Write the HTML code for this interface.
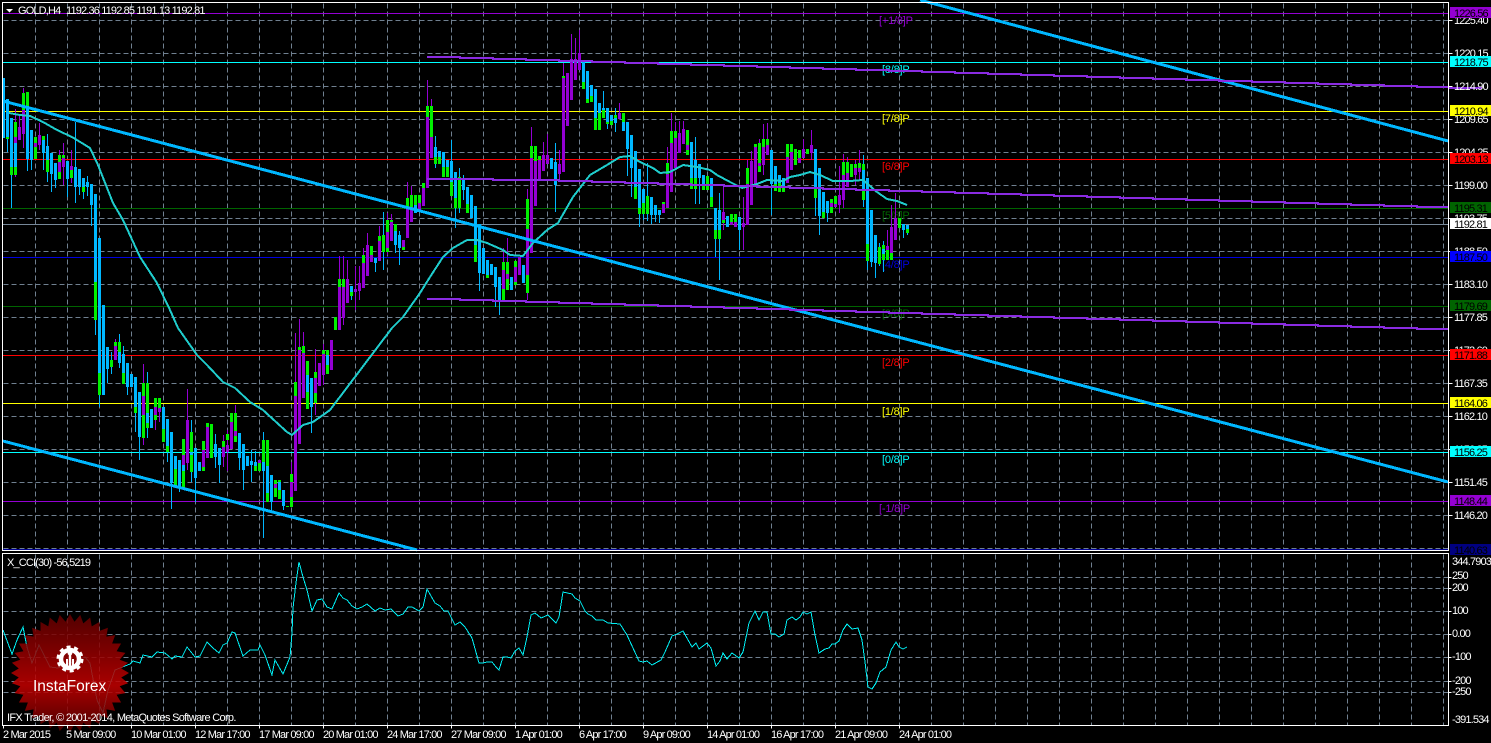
<!DOCTYPE html>
<html><head><meta charset="utf-8"><title>GOLD,H4</title>
<style>
html,body{margin:0;padding:0;background:#000;width:1491px;height:743px;overflow:hidden}
svg{display:block}
text{font-family:"Liberation Sans",sans-serif;font-size:11px;letter-spacing:-.85px;fill:#fff}
.k{fill:#000}
.m{font-size:11px;letter-spacing:-.2px}
</style></head><body>
<svg width="1491" height="743" viewBox="0 0 1491 743" xmlns="http://www.w3.org/2000/svg">
<defs>
<clipPath id="star">
<polygon points="0,-59 51.1,29.5 -51.1,29.5" transform="translate(70 673)"/>
<polygon points="0,-59 51.1,29.5 -51.1,29.5" transform="translate(70 673) rotate(10)"/>
<polygon points="0,-59 51.1,29.5 -51.1,29.5" transform="translate(70 673) rotate(20)"/>
<polygon points="0,-59 51.1,29.5 -51.1,29.5" transform="translate(70 673) rotate(30)"/>
<polygon points="0,-59 51.1,29.5 -51.1,29.5" transform="translate(70 673) rotate(40)"/>
<polygon points="0,-59 51.1,29.5 -51.1,29.5" transform="translate(70 673) rotate(50)"/>
<polygon points="0,-59 51.1,29.5 -51.1,29.5" transform="translate(70 673) rotate(60)"/>
<polygon points="0,-59 51.1,29.5 -51.1,29.5" transform="translate(70 673) rotate(70)"/>
<polygon points="0,-59 51.1,29.5 -51.1,29.5" transform="translate(70 673) rotate(80)"/>
<polygon points="0,-59 51.1,29.5 -51.1,29.5" transform="translate(70 673) rotate(90)"/>
<polygon points="0,-59 51.1,29.5 -51.1,29.5" transform="translate(70 673) rotate(100)"/>
<polygon points="0,-59 51.1,29.5 -51.1,29.5" transform="translate(70 673) rotate(110)"/>
</clipPath>
<linearGradient id="lg" x1="0" y1="0" x2="0" y2="1"><stop offset="0" stop-color="#5e0000"/><stop offset=".3" stop-color="#8c0000"/><stop offset=".6" stop-color="#c40000"/><stop offset=".8" stop-color="#8a0000"/><stop offset="1" stop-color="#4c0000"/></linearGradient>
</defs>
<rect width="1491" height="743" fill="#000"/>

<!-- grid -->
<g transform="translate(.5 .5)" stroke="#708090" stroke-width="1" stroke-dasharray="5 3" fill="none" shape-rendering="crispEdges">
<path d="M3 20H1448M3 53H1448M3 86H1448M3 119H1448M3 152H1448M3 185H1448M3 218H1448M3 251H1448M3 284H1448M3 317H1448M3 350H1448M3 383H1448M3 416H1448M3 449H1448M3 482H1448M3 515H1448M3 548H1448"/>
<path d="M35 3V549M67 3V549M99 3V549M131 3V549M163 3V549M195 3V549M227 3V549M259 3V549M291 3V549M323 3V549M355 3V549M387 3V549M419 3V549M451 3V549M483 3V549M515 3V549M547 3V549M579 3V549M611 3V549M643 3V549M675 3V549M707 3V549M739 3V549M771 3V549M803 3V549M835 3V549M867 3V549M899 3V549M931 3V549M963 3V549M995 3V549M1027 3V549M1059 3V549M1091 3V549M1123 3V549M1155 3V549M1187 3V549M1219 3V549M1251 3V549M1283 3V549M1315 3V549M1347 3V549M1379 3V549M1411 3V549M1443 3V549"/>
<path d="M3 577H1448M3 588H1448M3 611H1448M3 634H1448M3 657H1448M3 681H1448M3 692H1448"/>
<path d="M35 554V725M67 554V725M99 554V725M131 554V725M163 554V725M195 554V725M227 554V725M259 554V725M291 554V725M323 554V725M355 554V725M387 554V725M419 554V725M451 554V725M483 554V725M515 554V725M547 554V725M579 554V725M611 554V725M643 554V725M675 554V725M707 554V725M739 554V725M771 554V725M803 554V725M835 554V725M867 554V725M899 554V725M931 554V725M963 554V725M995 554V725M1027 554V725M1059 554V725M1091 554V725M1123 554V725M1155 554V725M1187 554V725M1219 554V725M1251 554V725M1283 554V725M1315 554V725M1347 554V725M1379 554V725M1411 554V725M1443 554V725"/>
</g>

<!-- murrey level lines -->
<g transform="translate(0 .5)" stroke-width="1" shape-rendering="crispEdges" fill="none">
<path d="M3 13H1448" stroke="#9400d3"/>
<path d="M3 62H1448" stroke="#00ffff"/>
<path d="M3 111H1448" stroke="#ffff00"/>
<path d="M3 159H1448" stroke="#ff0000"/>
<path d="M3 208H1448" stroke="#006400"/>
<path d="M3 224H1448" stroke="#778899"/>
<path d="M3 257H1448" stroke="#0000e0"/>
<path d="M3 306H1448" stroke="#006400"/>
<path d="M3 355H1448" stroke="#ff0000"/>
<path d="M3 403H1448" stroke="#ffff00"/>
<path d="M3 452H1448" stroke="#00ffff"/>
<path d="M3 501H1448" stroke="#9400d3"/>
<path d="M3 549H1448" stroke="#000090"/>
</g>

<!-- level text -->
<g>
<text class="m" x="879" y="24" style="fill:#9400d3">[+1/8]P</text>
<text class="m" x="882" y="73" style="fill:#00ffff">[8/8]P</text>
<text class="m" x="882" y="122" style="fill:#ffff00">[7/8]P</text>
<text class="m" x="882" y="170" style="fill:#ff0000">[6/8]P</text>
<text class="m" x="882" y="219" style="fill:#006400">[5/8]P</text>
<text class="m" x="882" y="268" style="fill:#0000e0">[4/8]P</text>
<text class="m" x="882" y="317" style="fill:#006400">[3/8]P</text>
<text class="m" x="882" y="366" style="fill:#ff0000">[2/8]P</text>
<text class="m" x="882" y="415" style="fill:#ffff00">[1/8]P</text>
<text class="m" x="882" y="463" style="fill:#00ffff">[0/8]P</text>
<text class="m" x="879" y="512" style="fill:#9400d3">[-1/8]P</text>
</g>

<!-- candles -->
<g transform="translate(.5 0)" fill="none" shape-rendering="crispEdges">
<path stroke="#00b7ff" stroke-width="1" d="M11 167V208M7 99V152M27 92V171M31 130V170M43 136V170M47 134V182M51 153V192M55 163V188M67 161V197M75 122V203M79 169V195M83 178V199M87 176V196M91 184V226M95 194V335M99 238V407M107 347V383M111 352V374M119 334V368M123 346V384M127 363V395M135 377V432M139 392V460M147 372V438M163 407V442M167 419V462M171 432V509M179 460V492M191 420V482M195 448V502M215 434V468M219 448V483M239 433V470M243 444V490M251 450V482M255 451V470M263 432V538M271 475V512M283 490V510M307 361V409M311 378V433M351 286V300M375 258V272M383 212V270M395 224V253M399 231V265M435 136V168M451 140V196M455 172V228M459 168V213M463 175V200M479 224V291M495 267V307M499 277V315M555 143V212M603 91V118M607 108V129M615 108V132M627 122V176M631 135V197M635 151V199M639 169V227M643 189V220M647 163V221M651 197V224M655 205V222M659 210V223M695 137V204M699 164V204M715 208V257M719 193V280M739 217V250M771 150V215M815 149V216M819 168V235M827 201V222M863 155V207M867 178V270M871 210V267M875 235V278M883 241V272M879 243V266M903 224V238M907 225V235"/>
<path stroke="#9400d3" stroke-width="1" d="M15 109V177M19 116V140M23 88V148M39 123V150M59 150V179M63 143V185M71 150V183M115 339V360M143 364V445M155 398V430M159 398V422M187 389V470M203 441V471M223 435V467M227 430V471M235 405V442M291 462V507M295 333V491M299 319V444M303 332V398M315 349V415M323 344V385M339 256V330M343 256V325M347 260V303M355 266V310M359 266V300M363 248V288M367 233V276M379 226V261M387 213V255M391 214V241M407 182V238M411 186V222M431 99V158M427 80V188M503 248V300M507 238V290M527 189V300M531 127V253M547 134V164M543 142V171M559 150V180M563 63V172M571 34V100M575 38V80M579 30V70M619 103V119M667 147V208M671 113V192M675 122V168M679 121V153M683 121V144M723 187V230M743 197V250M747 160V225M751 151V205M759 139V172M763 124V175M767 123V155M811 130V160M803 139V158M839 166V213M843 154V208M847 157V187M855 160V185M859 150V180M887 230V260M891 205V260M895 193V240"/>
<path stroke="#00f000" stroke-width="3" d="M11 167V175M7 137V139M15 122V175M23 93V110M27 92V107M35 137V159M43 136V140M47 160V172M59 155V179M63 155V158M71 170V178M83 187V192M95 282V320M99 373V395M103 373V395M111 360V367M115 342V346M119 342V352M123 373V384M135 407V413M143 383V438M147 383V428M155 398V420M159 398V408M163 429V442M167 446V452M175 469V487M183 439V488M191 432V472M203 441V471M207 423V427M211 424V458M223 441V457M227 434V440M231 413V422M235 413V442M255 466V471M259 463V471M263 440V462M267 440V502M275 480V497M279 480V499M287 506V507M291 474V507M295 382V396M299 347V350M303 346V353M307 361V409M315 372V403M323 350V354M327 350V374M335 317V330M339 279V287M343 279V287M351 292V296M363 255V263M371 246V257M379 236V241M383 235V252M387 220V252M391 220V222M395 224V231M403 247V250M407 198V208M411 195V207M415 195V205M419 195V203M423 183V188M427 106V117M431 106V137M435 157V164M439 157V164M443 167V177M447 167V177M451 182V196M455 198V208M459 177V208M467 204V213M475 245V262M487 275V278M503 262V300M507 262V290M515 261V285M527 199V293M531 146V158M535 146V161M539 156V160M563 76V78M583 82V89M587 99V103M591 96V102M595 118V130M599 113V130M603 110V118M607 122V124M611 121V125M615 115V123M623 113V122M635 187V199M639 208V214M643 203V214M647 196V214M663 202V204M667 163V174M671 131V143M675 131V138M687 130V155M691 178V189M695 178V189M703 185V190M707 176V190M711 197V207M715 230V239M719 230V239M723 220V223M731 214V222M735 214V227M747 168V184M755 144V147M759 143V172M763 139V147M767 139V145M775 184V191M779 183V192M783 186V192M787 144V157M791 144V152M795 149V165M799 150V158M807 149V154M815 189V198M823 212V218M831 199V213M835 196V204M843 162V175M847 162V173M851 164V177M855 164V168M859 163V168M863 164V200M867 244V261M879 247V264M883 245V249M883 254V260M887 250V260M891 253V260M899 218V228M907 229V233"/>
<path stroke="#00b7ff" stroke-width="3" d="M3 78V138M7 99V137M11 118V167M15 143V167M27 107V159M31 130V160M43 140V153M47 146V160M51 153V174M55 163V180M67 161V179M75 167V187M79 169V187M83 178V187M87 182V187M91 184V205M95 194V282M99 238V373M103 305V395M107 347V369M119 352V363M123 354V373M127 363V387M131 374V387M135 377V407M139 392V437M147 413V423M151 409V428M163 407V429M167 419V446M171 432V483M175 456V469M179 460V487M183 465V471M191 452V455M195 448V478M199 462V471M215 444V457M219 448V465M239 433V458M243 444V470M247 456V466M251 461V465M255 462V466M263 462V471M267 466V493M271 475V502M279 482V490M283 490V506M307 375V392M311 378V407M327 355V365M351 286V292M375 258V263M395 231V245M399 235V248M415 205V213M435 147V157M439 151V157M443 152V167M447 160V167M451 161V182M455 172V198M463 179V190M467 187V204M471 195V218M475 206V245M479 224V273M483 248V274M487 260V275M491 264V275M495 267V287M499 277V300M511 277V290M523 265V283M551 158V169M555 162V185M583 62V82M587 71V99M591 85V96M595 89V118M599 103V113M603 108V110M607 108V122M611 115V121M615 118V123M623 122V131M627 122V149M631 135V168M635 151V187M639 169V208M643 189V203M651 197V215M655 205V215M659 210V215M691 142V178M695 160V178M699 164V178M703 175V185M711 178V197M715 208V230M719 210V230M727 216V227M739 217V230M771 150V184M775 166V184M779 175V183M783 178V186M815 149V189M819 168V216M823 192V212M827 201V213M863 170V190M867 178V244M871 210V262M875 235V263M883 249V254M903 224V230M907 225V229"/>
<path stroke="#9400d3" stroke-width="3" d="M15 137V143M19 127V140M23 110V134M35 143V147M39 135V145M59 162V172M63 158V167M71 166V170M115 346V360M143 396V415M155 407V415M159 408V412M183 455V465M187 420V463M203 450V467M207 427V458M223 447V457M227 445V452M231 422V449M235 431V436M259 460V463M275 484V488M291 482V497M295 396V491M299 350V444M303 353V398M315 378V393M319 363V386M323 354V375M331 340V370M339 287V330M343 287V318M347 279V303M355 289V292M359 283V291M363 263V288M367 245V276M371 255V262M379 241V261M387 232V248M391 222V241M403 240V247M407 208V238M411 207V222M419 203V212M423 188V206M427 117V188M431 137V158M503 270V289M507 274V279M515 267V282M519 257V275M527 229V275M531 158V253M535 161V206M539 160V180M543 155V171M547 155V164M559 164V174M563 78V172M567 73V126M571 59V100M575 59V80M579 53V70M619 113V119M663 204V213M667 174V208M671 143V192M675 138V168M679 133V153M683 129V144M687 145V150M723 212V220M731 222V225M735 222V227M743 223V227M747 184V225M751 161V205M755 147V185M759 163V166M763 147V165M767 145V155M787 157V183M791 152V170M799 158V163M803 149V158M811 145V153M831 203V207M835 204V207M839 195V205M843 175V200M847 173V187M855 168V175M859 168V172M887 246V250M891 227V253M895 218V240"/>
</g>

<!-- MA line -->
<polyline fill="none" stroke="#1fcccc" stroke-width="2" shape-rendering="crispEdges" points="9,113 20,115 30,116 43,122 57,130 72,137 90,148 98,165 113,203 123,220 140,257 157,283 170,310 178,328 197,355 207,365 223,382 235,388 250,402 263,410 287,432 292,435 303,425 313,422 323,415 330,410 392,328 403,317 420,293 430,277 443,257 453,248 467,240 477,240 487,243 503,250 510,255 523,256 533,243 547,230 558,223 573,197 590,175 607,165 620,157 630,156 640,162 653,168 660,173 670,172 683,165 697,167 710,170 717,175 730,182 742,188 757,184 767,180 783,181 790,177 800,175 810,172 820,175 833,181 850,181 863,180 877,192 887,199 897,201 907,205"/>

<!-- trend lines -->
<g fill="none" stroke="#00b7ff" stroke-width="3" shape-rendering="crispEdges">
<path d="M3 101L1448 482"/>
<path d="M3 441L417 550"/>
<path d="M920 0L1448 141"/>
</g>
<!-- stepped purple lines -->
<g fill="none" stroke="#8a2be2" stroke-width="2" shape-rendering="crispEdges">
<path d="M427 57h33v1h33v1h33v1h33v1h33v1h33v1h33v1h33v1h33v1h33v1h33v1h33v1h33v1h33v1h33v1h33v1h33v1h33v1h33v1h33v1h33v1h33v1h33v1h33v1h33v1h33v1h33v1h33v1h33v1h33v1h33v1h32"/>
<path d="M427 179h33h33v1h33h33v1h33v1h33v1h33v1h33v1h33v1h33v1h33v1h33v1h33v1h33v1h33v1h33v1h33v1h33v1h33v1h33v1h33v1h33v1h33v1h33v1h33v1h33v1h33v1h33v1h33v1h33v1h32"/>
<path d="M427 299h33v1h33v1h33v1h33v1h33v1h33v1h33v1h33v1h33v1h33v1h33v1h33v1h33v1h33v1h33v1h33v1h33v1h33v1h33v1h33v1h33v1h33v1h33v1h33v1h33v1h33v1h33v1h33v1h33v1h33v1h32"/>
</g>

<!-- CCI -->
<polyline fill="none" stroke="#00f0f5" stroke-width="1" shape-rendering="crispEdges" points="3,630 12,654 17,640 23,627 27,647 32,663 39,645 50,667 58,668 70,663 85,657 90,663 97,700 103,713 108,690 115,670 130,664 133,661 140,663 143,655 152,657 157,652 165,653 172,659 175,656 182,657 187,647 195,657 200,656 207,642 213,648 219,653 223,645 227,643 232,632 235,633 243,656 250,650 258,650 260,645 265,655 272,675 275,660 283,674 290,657 292,633 293,608 296,583 299,562 303,577 307,590 312,611 317,600 322,599 327,607 332,609 339,593 343,598 347,600 352,606 357,609 362,607 367,604 375,611 380,608 385,610 391,609 398,616 403,614 408,607 412,607 419,611 423,607 427,589 435,603 440,606 444,611 448,611 455,625 460,622 465,627 472,638 479,663 483,663 487,662 492,662 496,667 499,670 503,657 507,657 511,658 515,651 519,648 523,655 527,637 531,615 535,613 541,618 548,615 556,623 559,617 563,592 572,594 575,598 580,601 585,611 588,614 592,616 596,620 600,620 603,620 608,623 620,624 627,635 633,648 639,661 643,662 647,661 652,665 661,660 665,652 672,636 677,634 683,631 692,647 696,643 699,649 707,643 711,648 716,666 720,661 723,653 727,659 732,653 739,658 743,652 749,623 755,611 759,620 763,612 767,612 771,634 775,634 779,637 784,634 787,620 792,617 796,620 800,617 803,612 807,614 811,612 815,635 819,653 825,649 829,648 832,644 835,644 839,641 843,630 847,624 852,629 858,628 862,640 865,662 868,687 872,689 876,683 880,672 886,667 891,650 896,642 899,647 903,649 907,647"/>

<!-- logo -->
<g opacity=".86" clip-path="url(#star)">
<rect x="8" y="611" width="124" height="124" fill="url(#lg)"/>
</g>
<g fill="none" stroke="#fff">
<circle cx="70" cy="659" r="9" stroke-width="4.5"/>
<circle cx="70" cy="659" r="12" stroke-width="3" stroke-dasharray="4 3.54"/>
</g>
<g fill="#fff"><circle cx="70" cy="653" r="2.4"/><rect x="68.8" y="655" width="2.4" height="12"/><rect x="66" y="659" width="2" height="8"/><rect x="72" y="659" width="2" height="8"/></g>
<text x="33" y="691" style="font-size:15.5px;letter-spacing:0;fill:#fff">InstaForex</text>

<!-- pane borders -->
<g fill="none" stroke="#fff" stroke-width="1" shape-rendering="crispEdges" transform="translate(.5 .5)">
<path d="M2 2H1448V550H2Z"/>
<path d="M2 553H1448V725H2Z"/>
<path d="M1448 20h4M1448 53h4M1448 86h4M1448 119h4M1448 152h4M1448 185h4M1448 218h4M1448 251h4M1448 284h4M1448 317h4M1448 350h4M1448 383h4M1448 416h4M1448 449h4M1448 482h4M1448 515h4M1448 577h3M1448 588h3M1448 611h3M1448 634h3M1448 657h3M1448 681h3M1448 692h3"/>
<path d="M3 725v3M67 725v3M131 725v3M195 725v3M259 725v3M323 725v3M387 725v3M451 725v3M515 725v3M579 725v3M643 725v3M707 725v3M771 725v3M835 725v3M899 725v3"/>
</g>

<!-- header -->
<path d="M6 9h7l-3.5 3.5z" fill="#fff"/>
<text x="18" y="14">GOLD,H4</text>
<text x="66" y="14">1192.36 1192.85 1191.13 1192.81</text>
<text x="7" y="566">X_CCI(30) -56,5219</text>
<text x="7" y="721" style="letter-spacing:-.7px">IFX Trader, © 2001-2014, MetaQuotes Software Corp.</text>

<!-- price axis -->
<g>
<text x="1454" y="24">1225.40</text>
<text x="1454" y="57">1220.15</text>
<text x="1454" y="90">1214.90</text>
<text x="1454" y="123">1209.65</text>
<text x="1454" y="156">1204.25</text>
<text x="1454" y="189">1199.00</text>
<text x="1454" y="222">1193.75</text>
<text x="1454" y="255">1188.50</text>
<text x="1454" y="288">1183.10</text>
<text x="1454" y="321">1177.85</text>
<text x="1454" y="354">1172.60</text>
<text x="1454" y="387">1167.35</text>
<text x="1454" y="420">1162.10</text>
<text x="1454" y="453">1156.85</text>
<text x="1454" y="486">1151.45</text>
<text x="1454" y="519">1146.20</text>
</g>
<g shape-rendering="crispEdges">
<rect x="1450" y="7" width="41" height="11" fill="#9400d3"/>
<rect x="1450" y="56" width="41" height="11" fill="#00ffff"/>
<rect x="1450" y="105" width="41" height="11" fill="#ffff00"/>
<rect x="1450" y="153" width="41" height="11" fill="#ff0000"/>
<rect x="1450" y="202" width="41" height="11" fill="#006400"/>
<rect x="1450" y="218" width="41" height="11" fill="#ffffff"/>
<rect x="1450" y="251" width="41" height="11" fill="#0000ff"/>
<rect x="1450" y="300" width="41" height="11" fill="#006400"/>
<rect x="1450" y="349" width="41" height="11" fill="#ff0000"/>
<rect x="1450" y="397" width="41" height="11" fill="#ffff00"/>
<rect x="1450" y="446" width="41" height="11" fill="#00ffff"/>
<rect x="1450" y="495" width="41" height="11" fill="#9400d3"/>
<rect x="1450" y="544" width="41" height="11" fill="#000080"/>
</g>
<g>
<text class="k" x="1454" y="17">1226.56</text>
<text class="k" x="1454" y="66">1218.75</text>
<text class="k" x="1454" y="115">1210.94</text>
<text class="k" x="1454" y="163">1203.13</text>
<text class="k" x="1454" y="212">1195.31</text>
<text class="k" x="1454" y="228">1192.81</text>
<text class="k" x="1454" y="261">1187.50</text>
<text class="k" x="1454" y="310">1179.69</text>
<text class="k" x="1454" y="359">1171.88</text>
<text class="k" x="1454" y="407">1164.06</text>
<text class="k" x="1454" y="456">1156.25</text>
<text class="k" x="1454" y="505">1148.44</text>
<text class="k" x="1454" y="554">1140.63</text>
</g>

<!-- CCI axis -->
<g>
<text x="1452" y="565">344.7903</text>
<text x="1452" y="579">250</text>
<text x="1452" y="591">200</text>
<text x="1452" y="614">100</text>
<text x="1452" y="637">0.00</text>
<text x="1452" y="660">-100</text>
<text x="1452" y="684">-200</text>
<text x="1452" y="695">-250</text>
<text x="1452" y="723">-391.534</text>
</g>

<!-- time axis -->
<g>
<text x="3" y="738">2 Mar 2015</text>
<text x="66" y="738">5 Mar 09:00</text>
<text x="131" y="738">10 Mar 01:00</text>
<text x="195" y="738">12 Mar 17:00</text>
<text x="259" y="738">17 Mar 09:00</text>
<text x="323" y="738">20 Mar 01:00</text>
<text x="387" y="738">24 Mar 17:00</text>
<text x="451" y="738">27 Mar 09:00</text>
<text x="515" y="738">1 Apr 01:00</text>
<text x="579" y="738">6 Apr 17:00</text>
<text x="643" y="738">9 Apr 09:00</text>
<text x="707" y="738">14 Apr 01:00</text>
<text x="771" y="738">16 Apr 17:00</text>
<text x="835" y="738">21 Apr 09:00</text>
<text x="899" y="738">24 Apr 01:00</text>
</g>
</svg>
</body></html>
